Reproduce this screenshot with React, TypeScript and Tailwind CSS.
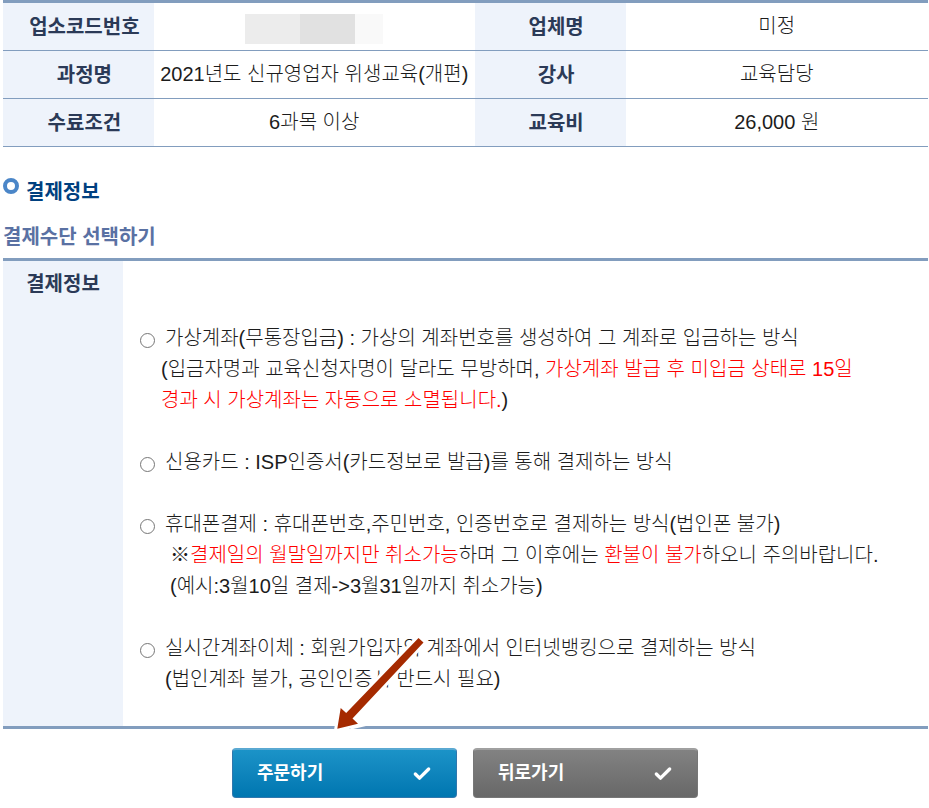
import { Check } from "lucide-react";

const courseRows = [
  ["업소코드번호", "", "업체명", "미정"],
  ["과정명", "2021년도 신규영업자 위생교육(개편)", "강사", "교육담당"],
  ["수료조건", "6과목 이상", "교육비", "26,000 원"],
];

function CourseTable() {
  return (
    <table className="w-full table-fixed border-separate border-spacing-0 border-t-[3px] border-[#829dbe] text-center">
      <colgroup>
        <col className="w-[16.3%]" />
        <col className="w-[34.7%]" />
        <col className="w-[16.3%]" />
        <col />
      </colgroup>
      <tbody>
        {courseRows.map(([label, value, label2, value2]) => (
          <tr key={label}>
            <th className="h-12 border-b border-[#829dbe] bg-[#eef3fb] pt-0.5 pl-3 font-bold text-[#2b3a57]">
              {label}
            </th>
            <td className="h-12 border-b border-[#829dbe] whitespace-nowrap">
              {value || (
                <div className="mx-auto mt-1 flex h-[30px] w-[138px]">
                  <span className="w-[55px] bg-[#ececec]" />
                  <span className="w-[55px] bg-[#e1e1e1]" />
                  <span className="w-7 bg-[#f9f9f9]" />
                </div>
              )}
            </td>
            <th className="h-12 border-b border-[#829dbe] bg-[#eef3fb] pt-0.5 pl-3 font-bold text-[#2b3a57]">
              {label2}
            </th>
            <td className="h-12 border-b border-[#829dbe]">{value2}</td>
          </tr>
        ))}
      </tbody>
    </table>
  );
}

function PayOption({ id, label, children }: { id: string; label: string; children?: React.ReactNode }) {
  return (
    <div>
      <div className="flex items-center gap-[10px]">
        <input
          id={id}
          type="radio"
          name="payment"
          className="mt-1 size-[15px] shrink-0 appearance-none rounded-full border border-[#767676] bg-white checked:border-4 checked:border-[#0075ff]"
        />
        <label htmlFor={id}>{label}</label>
      </div>
      {children}
    </div>
  );
}

function Arrow() {
  return (
    <svg
      className="pointer-events-none absolute bottom-[-3px] left-[328px]"
      width="100"
      height="96"
      viewBox="0 0 100 96"
    >
      <path d="M26 86 L35 90 L18 94 Z" fill="#fff" />
      <path
        d="M87.5 2 L92.5 6.5 L21.5 82.5 L27 87.7 L6.3 92.7 L9.7 72 L15.2 77 Z"
        fill="#a52a00"
        stroke="#fff"
        strokeWidth="6"
        paintOrder="stroke"
      />
    </svg>
  );
}

export default function App() {
  return (
    <div className="bg-white pl-[3px] pr-px font-['Liberation_Sans','Noto_Sans_CJK_KR',sans-serif] text-[20px] font-light leading-[31px] text-[#1c1c1c]">
      <CourseTable />

      <div className="flex items-start gap-[7px] pt-[30px]">
        <span className="mt-px size-4 rounded-full border-4 border-[#4b86c8]" />
        <h2 className="font-bold text-[#00407f]">결제정보</h2>
      </div>
      <h3 className="mt-[14px] font-bold text-[#5a71a3]">결제수단 선택하기</h3>

      <form>
        <div className="relative mt-[5px]">
          <table className="w-full border-separate border-spacing-0 border-y-[3px] border-[#829dbe]">
            <tbody>
              <tr>
                <th className="w-[120px] bg-[#eef3fb] pt-2 align-top font-bold text-[#2b3a57]">결제정보</th>
                <td className="pt-[62px] pr-4 pb-[31px] pl-[17px]">
                  <div className="flex flex-col gap-[31px]">
                    <PayOption
                      id="virtual"
                      label="가상계좌(무통장입금) : 가상의 계좌번호를 생성하여 그 계좌로 입금하는 방식"
                    >
                      <p className="pl-[21px]">
                        (입금자명과 교육신청자명이 달라도 무방하며,{" "}
                        <span className="text-[#f00]">
                          가상계좌 발급 후 미입금 상태로 15일
                          <br />
                          경과 시 가상계좌는 자동으로 소멸됩니다.
                        </span>
                        )
                      </p>
                    </PayOption>
                    <PayOption id="card" label="신용카드 : ISP인증서(카드정보로 발급)를 통해 결제하는 방식" />
                    <PayOption
                      id="phone"
                      label="휴대폰결제 : 휴대폰번호,주민번호, 인증번호로 결제하는 방식(법인폰 불가)"
                    >
                      <p className="pl-[30px]">
                        ※<span className="text-[#f00]">결제일의 월말일까지만 취소가능</span>하며 그 이후에는{" "}
                        <span className="text-[#f00]">환불이 불가</span>하오니 주의바랍니다.
                      </p>
                      <p className="pl-[30px]">(예시:3월10일 결제-&gt;3월31일까지 취소가능)</p>
                    </PayOption>
                    <PayOption
                      id="transfer"
                      label="실시간계좌이체 : 회원가입자의 계좌에서 인터넷뱅킹으로 결제하는 방식"
                    >
                      <p className="pl-[25px]">(법인계좌 불가, 공인인증서 반드시 필요)</p>
                    </PayOption>
                  </div>
                </td>
              </tr>
            </tbody>
          </table>
          <Arrow />
        </div>

        <div className="flex justify-center gap-4 pt-[19px] pr-px pb-[10px]">
          <button
            type="button"
            className="flex h-[50px] w-[225px] items-center justify-between rounded border border-t-2 border-[#3077ad] border-t-[#5aa9d2] bg-linear-to-b from-[#1b93c8] to-[#0076b0] px-6 text-[18px] font-bold text-white"
          >
            주문하기
            <Check size={20} strokeWidth={4} />
          </button>
          <button
            type="button"
            className="flex h-[50px] w-[225px] items-center justify-between rounded border border-t-2 border-[#777] border-t-[#a0a0a0] bg-linear-to-b from-[#828282] to-[#686868] px-6 text-[18px] font-bold text-white"
          >
            뒤로가기
            <Check size={20} strokeWidth={4} />
          </button>
        </div>
      </form>
    </div>
  );
}
